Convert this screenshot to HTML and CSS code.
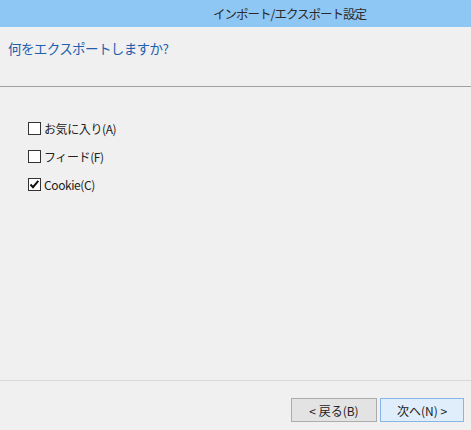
FILE: index.html
```html
<!DOCTYPE html>
<html lang="ja">
<head>
<meta charset="utf-8">
<link rel="stylesheet" href="styles.css">
</head>
<body>
<div class="window">
  <div class="titlebar"><span class="title">インポート/エクスポート設定</span></div>
  <div class="header"><span class="instruction">何をエクスポートしますか?</span></div>
  <div class="content">
    <label class="option"><span class="box"></span><span class="label">お気に入り(A)</span></label>
    <label class="option"><span class="box"></span><span class="label">フィード(F)</span></label>
    <label class="option"><span class="box"><svg width="11" height="11" viewBox="0 0 11 11"><path d="M1.5 5.5 L4 8.2 L9.3 1.8" fill="none" stroke="#111" stroke-width="2"/></svg></span><span class="label">Cookie(C)</span></label>
  </div>
  <div class="footer">
    <button class="btn">&lt; 戻る(B)</button>
    <button class="btn primary">次へ(N) &gt;</button>
  </div>
</div>
</body>
</html>
```
FILE: styles.css
```css
html, body {
  margin: 0;
  padding: 0;
  background: #f0f0f0;
}
.window {
  width: 471px;
  height: 430px;
  display: flex;
  flex-direction: column;
  font-family: "Noto Sans CJK JP", "Noto Sans", sans-serif;
  color: #222;
  background: #f0f0f0;
}
.titlebar {
  height: 27px;
  background: #8fc7f4;
  display: flex;
  align-items: center;
  padding-left: 213px;
  box-sizing: border-box;
}
.title {
  font-size: 12.5px;
  color: #2b2b2b;
  letter-spacing: -1px;
}
.header {
  height: 60px;
  border-bottom: 1px solid #a0a0a0;
  padding: 8px 0 0 8px;
  box-sizing: border-box;
}
.instruction {
  font-size: 13.5px;
  color: #1e5fae;
  letter-spacing: -0.6px;
}
.content {
  flex: 1;
  padding: 34px 0 0 28px;
  display: flex;
  flex-direction: column;
  gap: 14px;
  border-bottom: 1px solid #d8d8d8;
}
.option {
  display: flex;
  align-items: center;
  height: 14px;
  gap: 3px;
}
.box {
  width: 11px;
  height: 11px;
  border: 1px solid #333;
  background: #fff;
  display: flex;
  align-items: center;
  justify-content: center;
}
.box svg {
  display: block;
}
.label {
  font-size: 12px;
  color: #222;
  letter-spacing: -0.4px;
}
.footer {
  height: 49px;
  display: flex;
  justify-content: flex-end;
  align-items: flex-start;
  padding: 17px 7px 0 0;
  gap: 3px;
  box-sizing: border-box;
}
.btn {
  width: 86px;
  height: 24px;
  font-family: "Noto Sans CJK JP", "Noto Sans", sans-serif;
  font-size: 12px;
  color: #222;
  background: #e3e3e3;
  border: 1px solid #acacac;
  padding: 0;
  margin: 0;
}
.btn.primary {
  width: 84px;
  background: #e0edfa;
  border-color: #86b6e4;
}
```
